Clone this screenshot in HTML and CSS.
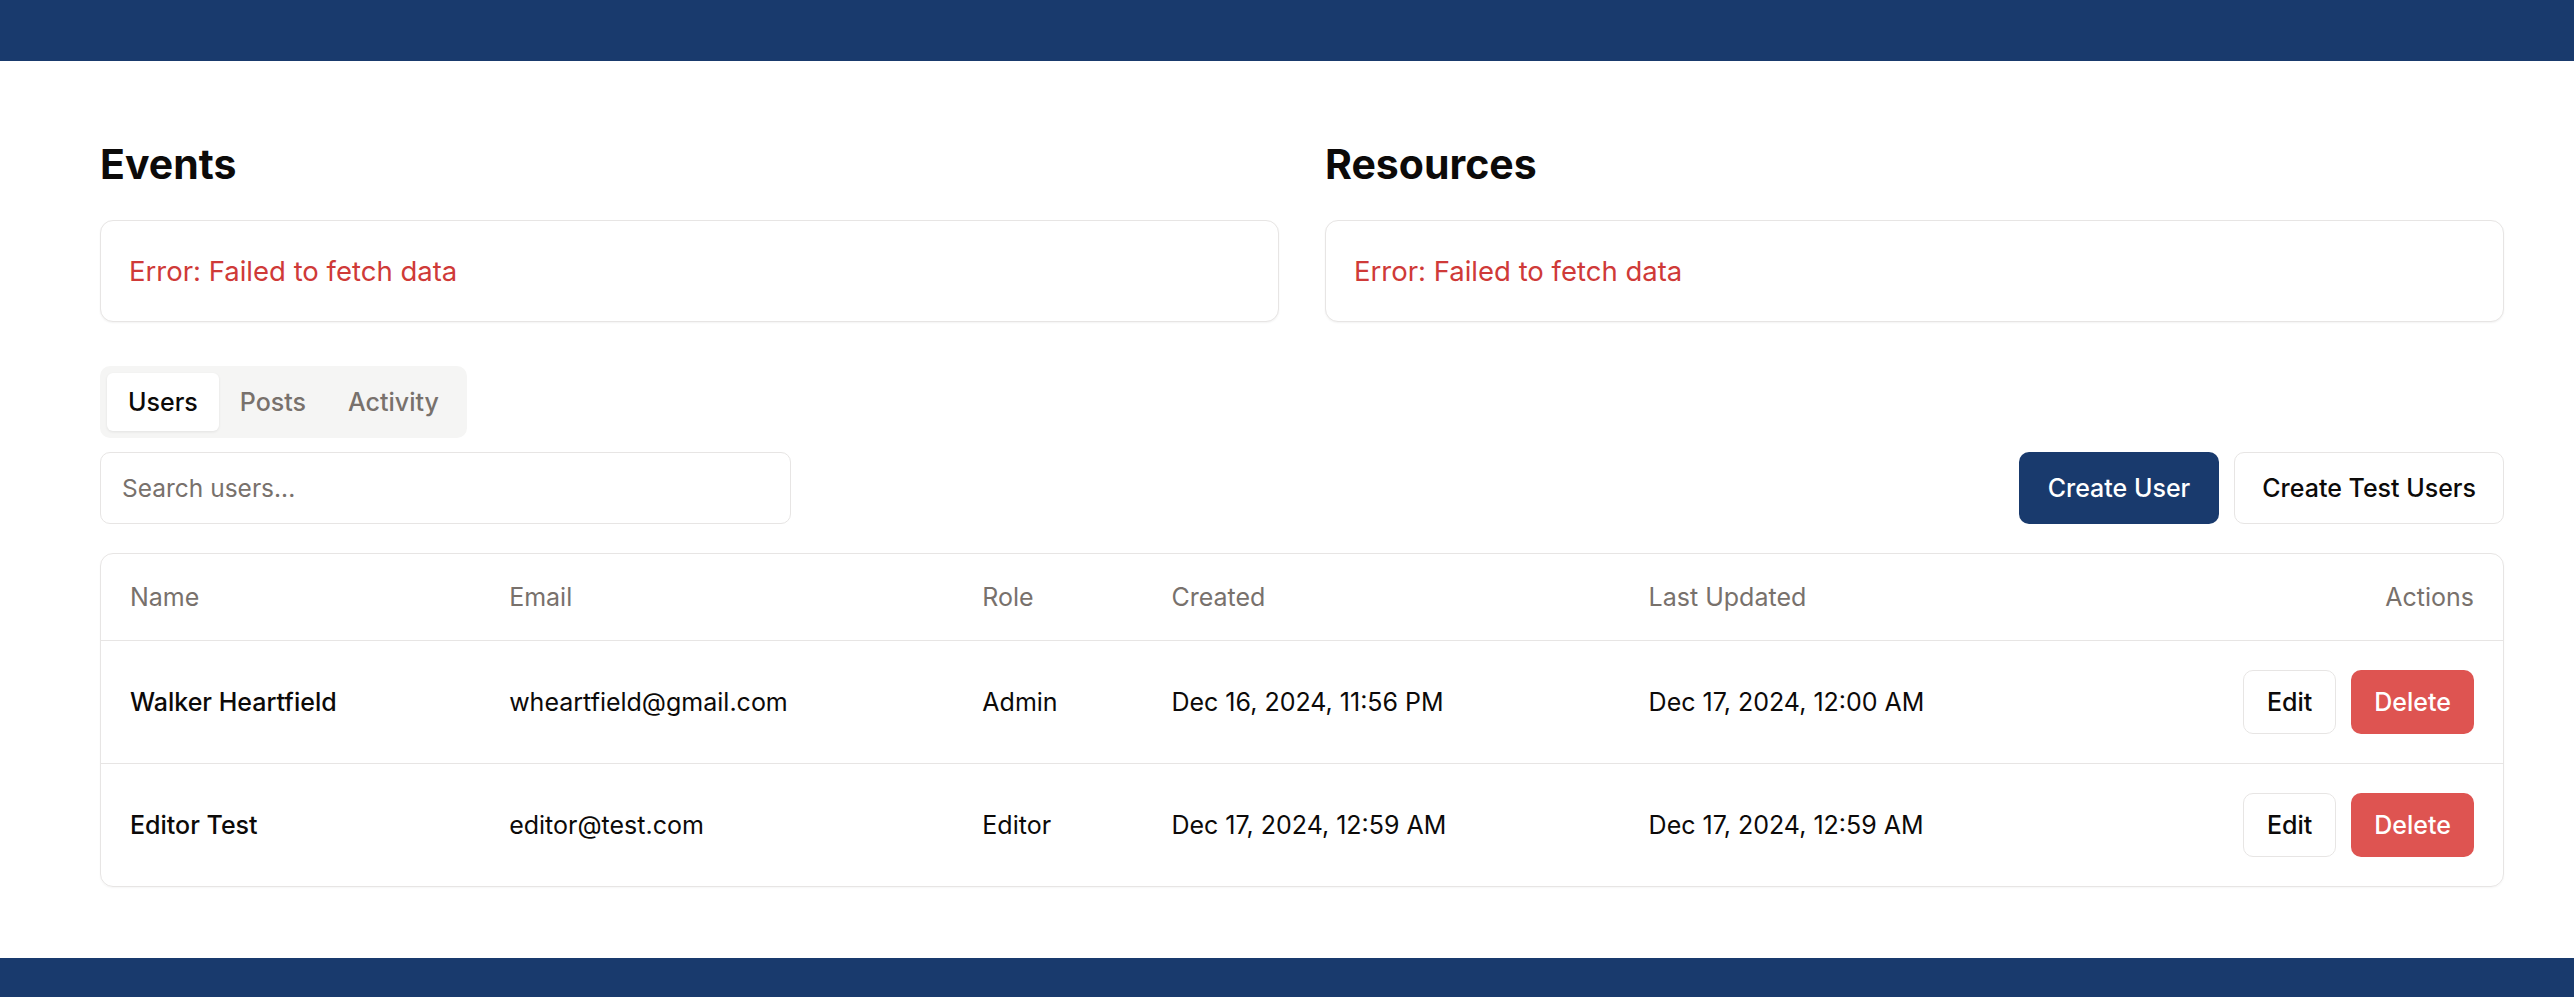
FILE: index.html
```html
<!DOCTYPE html>
<html lang="en">
<head>
<meta charset="utf-8">
<title>Dashboard</title>
<link rel="stylesheet" href="styles.css">
</head>
<body>
<header class="topbar"></header>
<main class="page">
  <section class="panels">
    <div class="panel">
      <h2 class="panel-title">Events</h2>
      <div class="card error-card"><p class="error">Error: Failed to fetch data</p></div>
    </div>
    <div class="panel">
      <h2 class="panel-title">Resources</h2>
      <div class="card error-card"><p class="error">Error: Failed to fetch data</p></div>
    </div>
  </section>

  <section class="users">
    <div class="tabs">
      <button class="tab active">Users</button>
      <button class="tab">Posts</button>
      <button class="tab">Activity</button>
    </div>

    <div class="toolbar">
      <input class="search" type="text" placeholder="Search users...">
      <div class="toolbar-actions">
        <button class="btn btn-primary">Create User</button>
        <button class="btn btn-outline">Create Test Users</button>
      </div>
    </div>

    <div class="table-card">
      <table class="users-table">
        <colgroup>
          <col class="c-name"><col class="c-email"><col class="c-role"><col class="c-created"><col class="c-updated"><col class="c-actions">
        </colgroup>
        <thead>
          <tr>
            <th>Name</th><th>Email</th><th>Role</th><th>Created</th><th>Last Updated</th><th class="right">Actions</th>
          </tr>
        </thead>
        <tbody>
          <tr>
            <td class="name">Walker Heartfield</td>
            <td>wheartfield@gmail.com</td>
            <td>Admin</td>
            <td>Dec 16, 2024, 11:56 PM</td>
            <td>Dec 17, 2024, 12:00 AM</td>
            <td class="right"><div class="row-actions"><button class="btn-sm btn-edit">Edit</button><button class="btn-sm btn-delete">Delete</button></div></td>
          </tr>
          <tr>
            <td class="name">Editor Test</td>
            <td>editor@test.com</td>
            <td>Editor</td>
            <td>Dec 17, 2024, 12:59 AM</td>
            <td>Dec 17, 2024, 12:59 AM</td>
            <td class="right"><div class="row-actions"><button class="btn-sm btn-edit">Edit</button><button class="btn-sm btn-delete">Delete</button></div></td>
          </tr>
        </tbody>
      </table>
    </div>
  </section>
</main>
<footer class="bottombar"></footer>
</body>
</html>
```
FILE: styles.css
```css
* { box-sizing: border-box; }

html, body {
  margin: 0;
  padding: 0;
  background: #ffffff;
  color: #0c0a09;
  font-family: Inter, "Noto Sans", "Liberation Sans", sans-serif;
}

button, input {
  font-family: inherit;
}

.topbar {
  height: 61px;
  background: #193a6d;
}

.bottombar {
  height: 39px;
  background: #193a6d;
}

.page {
  padding: 77px 70px 71px 100px;
}

.panels {
  display: grid;
  grid-template-columns: 1fr 1fr;
  column-gap: 46px;
}

.panel-title {
  margin: 0 0 30px;
  font-size: 41px;
  line-height: 52px;
  font-weight: 700;
}

.card {
  border: 1px solid #e7e5e4;
  border-radius: 13px;
  background: #fff;
  box-shadow: 0 1px 2px rgba(0, 0, 0, 0.05);
}

.error-card {
  padding: 31px 28px;
}

.error {
  margin: 0;
  color: #cf3a38;
  font-size: 27.5px;
  line-height: 38px;
}

.users {
  margin-top: 44px;
}

.tabs {
  display: inline-flex;
  padding: 7px;
  background: #f5f5f4;
  border-radius: 10px;
}

.tab {
  border: 0;
  background: transparent;
  padding: 11px 21px;
  font-size: 25px;
  line-height: 36px;
  font-weight: 500;
  color: #78716c;
  border-radius: 6px;
}

.tab.active {
  background: #fff;
  color: #0c0a09;
  box-shadow: 0 1px 3px rgba(0, 0, 0, 0.08);
}

.toolbar {
  margin-top: 14px;
  display: flex;
  justify-content: space-between;
  align-items: center;
}

.search {
  width: 691px;
  height: 72px;
  padding: 0 21px;
  border: 1px solid #e7e5e4;
  border-radius: 10px;
  font-size: 24.5px;
  color: #0c0a09;
  outline: none;
}

.search::placeholder {
  color: #78716c;
}

.toolbar-actions {
  display: flex;
  gap: 15px;
}

.btn {
  height: 72px;
  padding: 0 28px;
  border-radius: 10px;
  font-size: 25px;
  font-weight: 500;
  border: 1px solid transparent;
}

.btn-primary {
  background: #193a6d;
  color: #fff;
}

.btn-outline {
  background: #fff;
  border-color: #e7e5e4;
  color: #0c0a09;
  padding: 0 27px;
}

.table-card {
  margin-top: 29px;
  border: 1px solid #e7e5e4;
  border-radius: 13px;
  overflow: hidden;
  box-shadow: 0 1px 2px rgba(0, 0, 0, 0.04);
}

.users-table {
  width: 100%;
  border-collapse: collapse;
  table-layout: fixed;
}

.c-name { width: 379px; }
.c-email { width: 473px; }
.c-role { width: 189px; }
.c-created { width: 477px; }
.c-updated { width: 583px; }
.c-actions { width: 300px; }

.users-table th {
  height: 86px;
  padding: 0 29px;
  text-align: left;
  font-size: 25px;
  line-height: 34px;
  font-weight: 400;
  color: #78716c;
  border-bottom: 1px solid #e7e5e4;
}

.users-table td {
  height: 123px;
  padding: 0 29px;
  font-size: 25px;
  line-height: 34px;
  color: #0c0a09;
  vertical-align: middle;
}

.users-table tbody tr + tr td {
  border-top: 1px solid #e7e5e4;
}

.users-table .name {
  font-weight: 500;
}

.users-table .right {
  text-align: right;
}

.row-actions {
  display: flex;
  justify-content: flex-end;
  gap: 15px;
}

.btn-sm {
  height: 64px;
  padding: 0 23px;
  border-radius: 10px;
  font-size: 25px;
  font-weight: 500;
  border: 1px solid transparent;
}

.btn-edit {
  background: #fff;
  border-color: #e7e5e4;
  color: #0c0a09;
}

.btn-delete {
  background: #de5451;
  color: #fff;
  padding: 0 22px;
}
```
